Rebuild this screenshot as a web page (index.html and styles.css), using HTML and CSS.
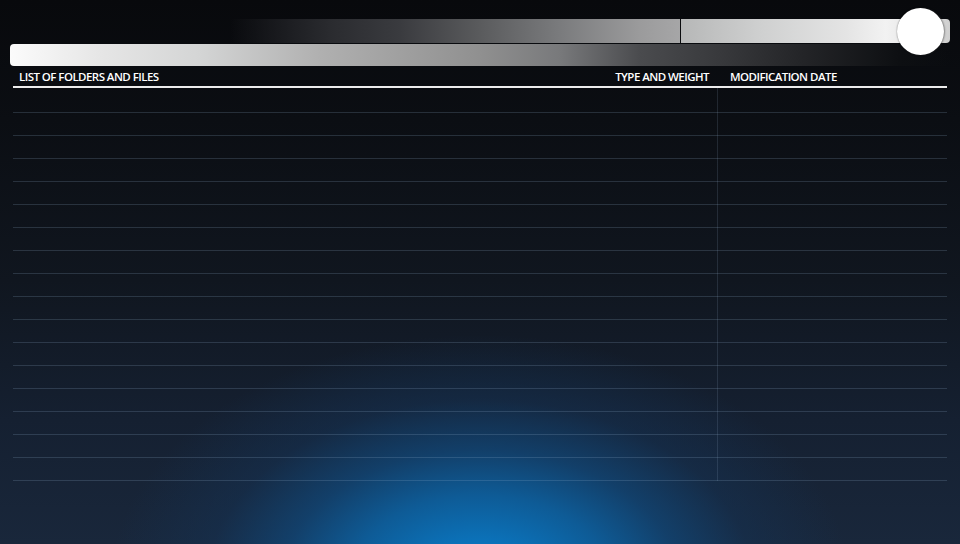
FILE: index.html
```html
<!DOCTYPE html>
<html lang="en">
<head>
<meta charset="utf-8">
<title>File browser</title>
<link rel="stylesheet" href="styles.css">
</head>
<body>
<div class="screen">
  <div class="player">
    <div class="track-top">
      <div class="seg seg-left"></div>
      <div class="seg-divider"></div>
      <div class="seg seg-right"></div>
      <div class="knob"></div>
    </div>
    <div class="track-bottom"></div>
  </div>
  <div class="table">
    <div class="thead">
      <div class="th th-name">LIST OF FOLDERS AND FILES</div>
      <div class="th th-type">TYPE AND WEIGHT</div>
      <div class="th th-date">MODIFICATION DATE</div>
    </div>
    <div class="tbody">
      <div class="row"><div class="cell"></div><div class="cell"></div></div>
      <div class="row"><div class="cell"></div><div class="cell"></div></div>
      <div class="row"><div class="cell"></div><div class="cell"></div></div>
      <div class="row"><div class="cell"></div><div class="cell"></div></div>
      <div class="row"><div class="cell"></div><div class="cell"></div></div>
      <div class="row"><div class="cell"></div><div class="cell"></div></div>
      <div class="row"><div class="cell"></div><div class="cell"></div></div>
      <div class="row"><div class="cell"></div><div class="cell"></div></div>
      <div class="row"><div class="cell"></div><div class="cell"></div></div>
      <div class="row"><div class="cell"></div><div class="cell"></div></div>
      <div class="row"><div class="cell"></div><div class="cell"></div></div>
      <div class="row"><div class="cell"></div><div class="cell"></div></div>
      <div class="row"><div class="cell"></div><div class="cell"></div></div>
      <div class="row"><div class="cell"></div><div class="cell"></div></div>
      <div class="row"><div class="cell"></div><div class="cell"></div></div>
      <div class="row"><div class="cell"></div><div class="cell"></div></div>
      <div class="row"><div class="cell"></div><div class="cell"></div></div>
    </div>
  </div>
</div>
</body>
</html>
```
FILE: styles.css
```css
* { box-sizing: border-box; }

html, body {
  margin: 0;
  padding: 0;
  width: 960px;
  height: 544px;
  overflow: hidden;
}

body {
  font-family: "Open Sans", "Liberation Sans", sans-serif;
  color: #fff;
  background-color: #0a0c10;
  background-image:
    radial-gradient(ellipse 370px 250px at 480px 585px, #0a84d6 0%, #0b71b8 18%, #0e5b96 36%, rgba(17,70,118,0.8) 54%, rgba(20,52,88,0.45) 74%, rgba(23,37,56,0) 100%),
    linear-gradient(to bottom, #08090c 0px, #0b0e13 120px, #10161f 280px, #152031 420px, #19273b 544px);
}

.screen {
  width: 960px;
  height: 544px;
  display: flex;
  flex-direction: column;
}

/* ---------- player bars ---------- */
.player {
  padding-top: 19px;
}

.track-top {
  position: relative;
  display: flex;
  margin-left: 230px;
  width: 720px;
  height: 24px;
}

.seg-left {
  width: 450px;
  height: 24px;
  background: linear-gradient(to right,
    rgba(30,31,35,0) 0px,
    #1d1e22 60px,
    #2a2b2f 100px,
    #3a3b3f 170px,
    #5a5b5d 250px,
    #7a7b7d 330px,
    #9b9b9c 410px,
    #a6a6a7 450px);
}

.seg-divider {
  width: 1px;
  height: 24px;
  background: #0b0c0e;
}

.seg-right {
  flex: 1;
  height: 24px;
  border-radius: 0 4px 4px 0;
  background: linear-gradient(to right,
    #b6b7b7 0px,
    #cfd0d0 80px,
    #e4e4e4 165px,
    #f2f2f2 205px,
    #e0e0e0 245px,
    #cfcfcf 269px);
}

.knob {
  position: absolute;
  left: 667px;
  top: -11px;
  width: 47px;
  height: 47px;
  border-radius: 50%;
  background: #fff;
  box-shadow: 0 0 1.5px rgba(0,0,0,0.55), 1px 0 2px rgba(60,60,60,0.35);
}

.track-bottom {
  margin: 1px 10px 0 10px;
  height: 22px;
  border-radius: 4px 0 0 4px;
  background: linear-gradient(to right,
    #fbfbfb 0px,
    #e6e6e6 90px,
    #d4d5d5 190px,
    #b0b0b0 310px,
    #909090 470px,
    #78797b 550px,
    #4a4b4e 630px,
    #38393c 710px,
    #242528 790px,
    #0d0f12 890px,
    rgba(10,12,16,0) 940px);
}

/* ---------- table ---------- */
.table {
  margin: 0 13px;
  width: 934px;
}

.thead {
  display: flex;
  height: 22px;
  padding-top: 5px;
  border-bottom: 2px solid #ececec;
  font-size: 11.5px;
  line-height: 12px;
  font-weight: 600;
  letter-spacing: -0.55px;
  white-space: nowrap;
}

.th-name {
  flex: 1;
  padding-left: 6px;
}

.th-type {
  padding-right: 8px;
}

.th-date {
  width: 230px;
  padding-left: 13px;
}

.tbody {
  padding-top: 2px;
  background: linear-gradient(to right,
    transparent 704px,
    rgba(150,175,205,0.16) 704px,
    rgba(150,175,205,0.16) 705px,
    transparent 705px);
}

.row {
  display: grid;
  grid-template-columns: 704px 1fr;
  height: 23px;
  border-bottom: 1px solid rgba(150,178,210,0.2);
}
```
